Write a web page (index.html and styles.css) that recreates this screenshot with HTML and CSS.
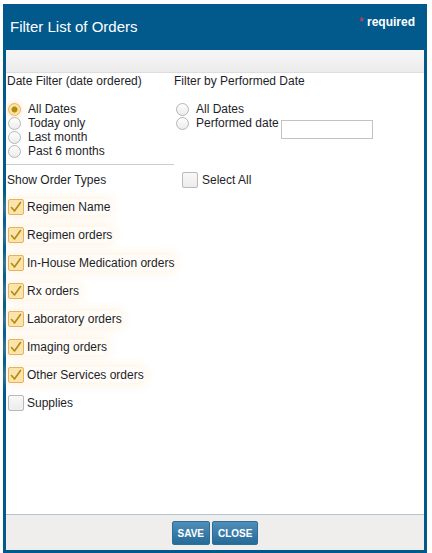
FILE: index.html
```html
<!DOCTYPE html>
<html lang="en">
<head>
    <meta charset="UTF-8">
    <title>Filter List of Orders</title>
    <link rel="stylesheet" href="styles.css">
</head>
<body>
    <div class="dialog">
        <div class="dialog-header">
            <span class="dialog-title">Filter List of Orders</span>
            <span class="required"><span class="star">*</span> required</span>
        </div>
        <div class="toolbar"></div>

        <div class="dialog-body">
            <div class="date-filters">
                <div class="col col-left">
                    <div class="heading">Date Filter (date ordered)</div>
                    <div class="radio-group">
                        <label class="radio"><input type="radio" name="ordered" checked> All Dates</label>
                        <label class="radio"><input type="radio" name="ordered"> Today only</label>
                        <label class="radio"><input type="radio" name="ordered"> Last month</label>
                        <label class="radio"><input type="radio" name="ordered"> Past 6 months</label>
                    </div>
                    <div class="divider"></div>
                </div>
                <div class="col col-right">
                    <div class="heading">Filter by Performed Date</div>
                    <div class="radio-group">
                        <label class="radio"><input type="radio" name="performed"> All Dates</label>
                        <div class="performed-row">
                            <label class="radio"><input type="radio" name="performed"> Performed date</label>
                            <input type="text" class="date-input">
                        </div>
                    </div>
                </div>
            </div>

            <div class="types-head">
                <span class="types-title">Show Order Types</span>
                <label class="check"><input type="checkbox"> Select All</label>
            </div>

            <div class="type-list">
                <label class="check on"><input type="checkbox" checked> Regimen Name</label>
                <label class="check on"><input type="checkbox" checked> Regimen orders</label>
                <label class="check on"><input type="checkbox" checked> In-House Medication orders</label>
                <label class="check on"><input type="checkbox" checked> Rx orders</label>
                <label class="check on"><input type="checkbox" checked> Laboratory orders</label>
                <label class="check on"><input type="checkbox" checked> Imaging orders</label>
                <label class="check on"><input type="checkbox" checked> Other Services orders</label>
                <label class="check"><input type="checkbox"> Supplies</label>
            </div>
        </div>

        <div class="dialog-footer">
            <button class="btn">SAVE</button>
            <button class="btn">CLOSE</button>
        </div>
    </div>
</body>
</html>
```

FILE: styles.css
```css
body {
    margin: 0;
    background-color: #ffffff;
    font-family: "Liberation Sans", Arial, sans-serif;
    font-size: 12px;
    color: #1e1e28;
}
.dialog {
    display: flex;
    flex-direction: column;
    width: 424px;
    height: 549px;
    margin: 4px 0 0 3px;
    box-sizing: border-box;
    border: 3px solid #02598c;
    border-top: none;
    background-color: #ffffff;
}
.dialog-header {
    display: flex;
    justify-content: space-between;
    height: 46px;
    margin: 0 -3px;
    padding: 0 12px 0 7px;
    background-color: #02598c;
    color: #ffffff;
}
.dialog-title {
    margin-top: 14px;
    font-size: 15px;
}
.required {
    margin-top: 11px;
    font-size: 12px;
    font-weight: bold;
}
.star {
    color: #e8334a;
    font-weight: normal;
}
.toolbar {
    height: 23px;
    box-sizing: border-box;
    background: linear-gradient(#f6f6f6, #ececec);
    border-bottom: 1px solid #dddddd;
}
.dialog-body {
    flex: 1;
    padding: 1px 0 0 1px;
}
.date-filters {
    display: grid;
    grid-template-columns: 167px 1fr;
}
.heading {
    line-height: 14px;
    height: 14px;
}
.radio-group {
    display: flex;
    flex-direction: column;
    margin-top: 14px;
}
.radio {
    display: flex;
    align-items: center;
    height: 14px;
}
.radio input {
    appearance: none;
    width: 13px;
    height: 13px;
    margin: 0 7px 0 1px;
    border: 1px solid #b5b5b5;
    border-radius: 50%;
    background: linear-gradient(#fdfdfd, #ececec);
    box-sizing: border-box;
}
.radio input:checked {
    border-color: #e8b45a;
    background: radial-gradient(circle, #b38a10 0, #b38a10 2.5px, #fbe3a8 3.5px);
    box-shadow: 0 0 6px rgba(250, 190, 110, 0.5);
}
.col-right .radio input {
    margin-left: 2px;
}
.performed-row {
    display: flex;
    align-items: flex-start;
}
.date-input {
    width: 92px;
    height: 19px;
    margin: 4px 0 0 2px;
    box-sizing: border-box;
    border: 1px solid #c2c2c2;
    padding: 0;
}
.divider {
    margin-top: 6px;
    border-top: 1px solid #cccccc;
    width: 168px;
    margin-left: -1px;
}
.types-head {
    display: flex;
    align-items: center;
    height: 16px;
    margin-top: 7px;
}
.types-title {
    width: 174px;
}
.type-list {
    display: flex;
    flex-direction: column;
    gap: 12px;
    margin-top: 11px;
}
.check {
    display: flex;
    align-items: center;
    height: 16px;
    align-self: flex-start;
}
.check input {
    appearance: none;
    width: 16px;
    height: 16px;
    margin: 0 4px 0 1px;
    border: 1px solid #b9b9b9;
    border-radius: 2px;
    background: linear-gradient(#f8f8f8, #ececec);
    box-sizing: border-box;
}
.type-list .check input {
    margin-right: 3px;
}
.check input:checked {
    border-color: #e6b35c;
    background: #fbe4ab url("data:image/svg+xml,%3Csvg xmlns='http://www.w3.org/2000/svg' width='14' height='14' viewBox='0 0 14 14'%3E%3Cpath d='M2.5 7.5 L5.5 11 L11.5 2.5' fill='none' stroke='%23b08a12' stroke-width='1.6' stroke-linecap='round' stroke-linejoin='round'/%3E%3C/svg%3E") center / 14px 14px no-repeat;
}
.check.on {
    box-shadow: 0 0 10px 2px rgba(253, 226, 190, 0.45);
    background-color: rgba(255, 248, 236, 0.4);
    border-radius: 6px;
}
.dialog-footer {
    display: flex;
    justify-content: center;
    gap: 2px;
    height: 36px;
    padding-top: 6px;
    box-sizing: border-box;
    background-color: #efeeec;
    border-top: 1px solid #b3c5cf;
}
.btn {
    height: 24px;
    padding: 0 5px;
    border: 1px solid #2d6e99;
    border-radius: 2px;
    background: linear-gradient(#4f8fb9, #266a98);
    color: #ffffff;
    font-family: "Liberation Sans", Arial, sans-serif;
    font-size: 10px;
    font-weight: bold;
}
```
